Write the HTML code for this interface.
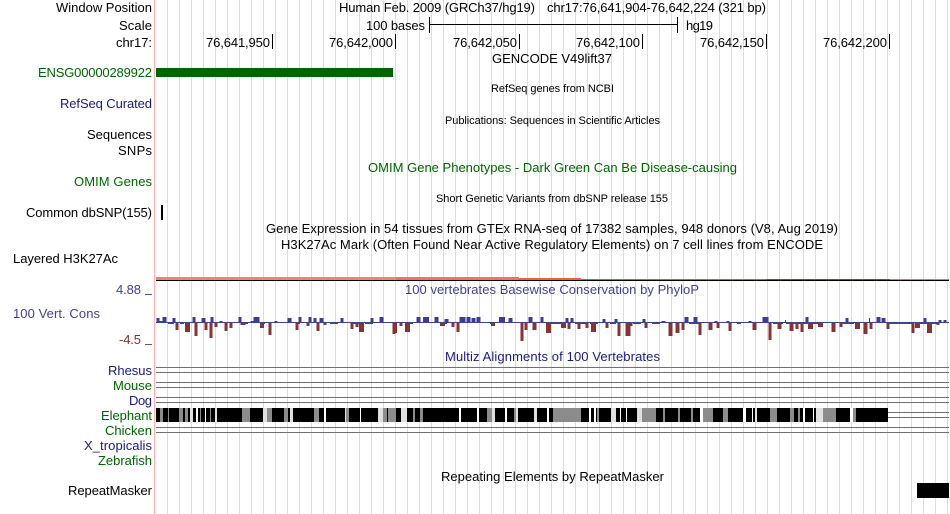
<!DOCTYPE html>
<html>
<head>
<meta charset="utf-8">
<style>
html,body{margin:0;padding:0;background:#fff;width:950px;height:514px;overflow:hidden}
svg{display:block}
text{font-family:"Liberation Sans",sans-serif;font-size:13px;fill:#000}
.s{font-size:11px}
.g{fill:#006400}
.n{fill:#191980}
.p{fill:#404090}
</style>
</head>
<body>
<svg width="950" height="514" viewBox="0 0 950 514" xmlns="http://www.w3.org/2000/svg" shape-rendering="crispEdges">
<rect width="950" height="514" fill="#fff"/>
<!-- grid -->
<path stroke="#dadaf4" stroke-width="1" fill="none" d="M167.5 0v514M179.5 0v514M191.5 0v514M203.5 0v514M215.5 0v514M227.5 0v514M239.5 0v514M251.5 0v514M263.5 0v514M275.5 0v514M287.5 0v514M299.5 0v514M311.5 0v514M323.5 0v514M335.5 0v514M347.5 0v514M359.5 0v514M371.5 0v514M383.5 0v514M395.5 0v514M407.5 0v514M419.5 0v514M431.5 0v514M443.5 0v514M455.5 0v514M467.5 0v514M479.5 0v514M491.5 0v514M503.5 0v514M515.5 0v514M527.5 0v514M539.5 0v514M551.5 0v514M563.5 0v514M575.5 0v514M587.5 0v514M599.5 0v514M611.5 0v514M623.5 0v514M635.5 0v514M647.5 0v514M659.5 0v514M671.5 0v514M683.5 0v514M695.5 0v514M707.5 0v514M719.5 0v514M731.5 0v514M743.5 0v514M755.5 0v514M767.5 0v514M779.5 0v514M791.5 0v514M803.5 0v514M815.5 0v514M827.5 0v514M839.5 0v514M851.5 0v514M863.5 0v514M875.5 0v514M887.5 0v514M899.5 0v514M911.5 0v514M923.5 0v514M935.5 0v514M947.5 0v514"/>
<rect x="154" y="0" width="1" height="514" fill="#ffb0b0"/>

<!-- left labels -->
<text x="56" y="12" textLength="96">Window Position</text>
<text x="119" y="30" textLength="33">Scale</text>
<text x="116" y="47" textLength="36">chr17:</text>
<text class="g" x="38" y="77" textLength="114">ENSG00000289922</text>
<text class="n" x="60" y="108" textLength="92">RefSeq Curated</text>
<text x="87" y="139" textLength="65">Sequences</text>
<text x="118" y="155" textLength="34">SNPs</text>
<text class="g" x="74" y="186" textLength="78">OMIM Genes</text>
<text x="26" y="217" textLength="126">Common dbSNP(155)</text>
<text x="13" y="263" textLength="105">Layered H3K27Ac</text>
<text class="p" x="116" y="294" textLength="25">4.88</text>
<rect x="145" y="294" width="7" height="1" fill="#505090"/>
<text x="13" y="318" class="p" textLength="87">100 Vert. Cons</text>
<text x="119" y="344" textLength="22" style="fill:#803030">-4.5</text>
<rect x="145" y="344" width="7" height="1" fill="#805050"/>
<text class="n" x="108" y="375" textLength="44">Rhesus</text>
<text class="g" x="113" y="390" textLength="39">Mouse</text>
<text class="n" x="129" y="405" textLength="23">Dog</text>
<text class="g" x="101" y="420" textLength="51">Elephant</text>
<text class="g" x="105" y="435" textLength="47">Chicken</text>
<text class="n" x="84" y="450" textLength="68">X_tropicalis</text>
<text class="g" x="98" y="465" textLength="54">Zebrafish</text>
<text x="68" y="495" textLength="84">RepeatMasker</text>

<!-- header -->
<text x="339" y="12" textLength="196">Human Feb. 2009 (GRCh37/hg19)</text>
<text x="547" y="12" textLength="219">chr17:76,641,904-76,642,224 (321 bp)</text>
<text x="366" y="30" textLength="59">100 bases</text>
<text x="686" y="30" textLength="27">hg19</text>
<path stroke="#000" fill="none" d="M429.5 17v16M677.5 17v16M429 24.5h249"/>
<text x="206" y="47" textLength="64">76,641,950</text>
<text x="329" y="47" textLength="64">76,642,000</text>
<text x="453" y="47" textLength="64">76,642,050</text>
<text x="576" y="47" textLength="64">76,642,100</text>
<text x="700" y="47" textLength="64">76,642,150</text>
<text x="823" y="47" textLength="64">76,642,200</text>
<path stroke="#000" fill="none" d="M272.5 34v15M395.5 34v15M519.5 34v15M642.5 34v15M766.5 34v15M889.5 34v15"/>

<!-- center labels -->
<text x="492" y="63" textLength="120">GENCODE V49lift37</text>
<rect x="156" y="68" width="237" height="9" fill="#006400"/>
<text class="s" x="491" y="92" textLength="123">RefSeq genes from NCBI</text>
<text class="s" x="445" y="124" textLength="215">Publications: Sequences in Scientific Articles</text>
<text class="g" x="368" y="172" textLength="369">OMIM Gene Phenotypes - Dark Green Can Be Disease-causing</text>
<text class="s" x="436" y="202" textLength="232">Short Genetic Variants from dbSNP release 155</text>
<rect x="161" y="205" width="2" height="15" fill="#000"/>
<text x="266" y="233" textLength="572">Gene Expression in 54 tissues from GTEx RNA-seq of 17382 samples, 948 donors (V8, Aug 2019)</text>
<text x="281" y="249" textLength="542">H3K27Ac Mark (Often Found Near Active Regulatory Elements) on 7 cell lines from ENCODE</text>

<!-- layered H3K27Ac -->
<rect x="156" y="277" width="240" height="3" fill="#f67f78"/>
<rect x="396" y="277" width="123" height="3" fill="#f4735c"/>
<rect x="519" y="278" width="62" height="2" fill="#f0603c"/>
<rect x="581" y="279" width="185" height="1" fill="#b86060"/>
<rect x="766" y="279" width="124" height="1" fill="#a03838"/>
<rect x="890" y="279" width="59" height="1" fill="#c08080"/>
<rect x="156" y="280" width="793" height="1" fill="#000"/>

<text class="p" x="405" y="294" textLength="294">100 vertebrates Basewise Conservation by PhyloP</text>

<!-- phyloP -->
<rect x="156" y="322" width="793" height="1" fill="#404090"/>
<path stroke="#883333" stroke-width="1" fill="none" d="M168 323.500h6M180 323.500h4M243 323.500h5M262 323.500h3M297 323.500h3M330 323.500h8M352 323.500h12M365 323.500h8M405 323.500h8M441 323.500h6M490 323.500h5M548 323.500h16M575 323.500h12M590 323.500h8M610 323.500h6M633 323.500h8M652 323.500h8M689 323.500h12M737 323.500h4M773 323.500h10M786 323.500h36M840 323.500h14M888 323.500h24M915 323.500h12M932 323.500h6"/>
<path stroke="#3c3c90" stroke-width="3" fill="none" d="M158 323v-5M161 323v-2M174 323v-5M194 323v-6M212 323v-6M221 323v-2M240 323v-6M252 323v-2M276 323v-2M300 323v-6M310 323v-6M315 323v-5M342 323v-5M372 323v-5M542 323v-6M567 323v-5M572 323v-5M604 323v-4M616 323v-4M644 323v-4M807 323v-6M847 323v-5M925 323v-5M940 323v-3M945 323v-3M750 323v-2M716 323v-2M728 323v-2"/>
<path stroke="#3c3c90" stroke-width="1" fill="none" d="M869.500 323v-5M785.500 323v-3"/>
<path stroke="#3c3c90" stroke-width="4" fill="none" d="M164.500 323v-6M203.500 323v-5M289.500 323v-5M321.500 323v-5M381.500 323v-6M418.500 323v-6M436.500 323v-6M446.500 323v-4M468.500 323v-6M473.500 323v-5M478.500 323v-6M510.500 323v-5M530.500 323v-6M686.500 323v-6M695.500 323v-6M878.500 323v-6M883.500 323v-5M663.500 323v-2"/>
<path stroke="#3c3c90" stroke-width="6" fill="none" d="M256.500 323v-6M426 323v-6M462.500 323v-6M502 323v-6M765.500 323v-6"/>
<path stroke="#883333" stroke-width="3" fill="none" d="M177 323v7M196 323v13M206 323v7M211 323v15M216 323v4M226 323v8M231 323v5M270 323v12M297 323v7M308 323v3M318 323v8M325 323v2M352 323v6M357 323v4M394 323v11M401 323v3M453 323v4M458 323v9M522 323v18M526 323v7M569 323v6M579 323v6M587 323v5M607 323v5M619 323v13M631 323v3M646 323v5M683 323v7M700 323v12M718 323v5M730 323v8M770 323v17M797 323v6M802 323v9M841 323v4M871 323v6M888 323v6M913 323v10M938 323v2"/>
<path stroke="#883333" stroke-width="4" fill="none" d="M262 323v5M395 323v10M534.500 323v7M670.500 323v13M677.500 323v10M710.500 323v7M754.500 323v7M779.500 323v6M791.500 323v8M833.500 323v9M865.500 323v11M493 323v3"/>
<path stroke="#883333" stroke-width="5" fill="none" d="M187.500 323v9M407.500 323v9M361.500 323v9M548.500 323v10M628 323v13M563.500 323v5M593.500 323v9M810.500 323v6M820.500 323v4M857.500 323v6M917.500 323v5M929.500 323v10M442.500 323v3M243 323v2"/>

<text class="n" x="445" y="361" textLength="215">Multiz Alignments of 100 Vertebrates</text>

<!-- multiz lines -->
<path stroke="#707070" fill="none" d="M156 367.500h793M156 372.500h793M156 382.500h793M156 387.500h793M156 397.500h793M156 402.500h793M156 427.500h793M156 432.500h793M888 412.500h61M888 417.500h61"/>
<!-- elephant -->
<rect x="156" y="408" width="732" height="14" fill="#000"/>
<g fill="#8c8c8c">
<rect x="160" y="408" width="3" height="14"/><rect x="168" y="408" width="1" height="14"/><rect x="179" y="408" width="4" height="14"/><rect x="185" y="408" width="3" height="14"/><rect x="200" y="408" width="1" height="14"/><rect x="210" y="408" width="1" height="14"/>
<rect x="242" y="408" width="8" height="14"/><rect x="267" y="408" width="5" height="14"/><rect x="284" y="408" width="4" height="14"/><rect x="314" y="408" width="5" height="14"/><rect x="345" y="408" width="4" height="14"/><rect x="382" y="408" width="5" height="14"/><rect x="388" y="408" width="8" height="14"/><rect x="413" y="408" width="2" height="14"/><rect x="420" y="408" width="3" height="14"/><rect x="487" y="408" width="5" height="14"/><rect x="514" y="408" width="2" height="14"/>
<rect x="553" y="408" width="28" height="14"/><rect x="597" y="408" width="2" height="14"/><rect x="643" y="408" width="13" height="14"/><rect x="663" y="408" width="2" height="14"/><rect x="678" y="408" width="2" height="14"/><rect x="691" y="408" width="2" height="14"/><rect x="703" y="408" width="10" height="14"/><rect x="723" y="408" width="5" height="14"/><rect x="642" y="408" width="1" height="14"/><rect x="755" y="408" width="1" height="14"/><rect x="770" y="408" width="7" height="14"/><rect x="790" y="408" width="4" height="14"/><rect x="798" y="408" width="2" height="14"/><rect x="823" y="408" width="13" height="14"/><rect x="853" y="408" width="3" height="14"/>
</g>
<g fill="#e0e0e0">
<rect x="215" y="408" width="2" height="14"/><rect x="190" y="408" width="3" height="14"/><rect x="263" y="408" width="4" height="14"/><rect x="290" y="408" width="3" height="14"/><rect x="345" y="408" width="1" height="14"/><rect x="378" y="408" width="5" height="14"/><rect x="401" y="408" width="6" height="14"/><rect x="492" y="408" width="3" height="14"/><rect x="516" y="408" width="2" height="14"/><rect x="534" y="408" width="3" height="14"/><rect x="611" y="408" width="5" height="14"/><rect x="637" y="408" width="5" height="14"/><rect x="755" y="408" width="2" height="14"/><rect x="816" y="408" width="7" height="14"/>
</g>
<g fill="#fff">
<rect x="196" y="408" width="2" height="14"/><rect x="205" y="408" width="1" height="14"/><rect x="324" y="408" width="2" height="14"/><rect x="360" y="408" width="1" height="14"/><rect x="459" y="408" width="2" height="14"/><rect x="477" y="408" width="2" height="14"/><rect x="505" y="408" width="2" height="14"/><rect x="547" y="408" width="2" height="14"/><rect x="589" y="408" width="2" height="14"/><rect x="594" y="408" width="2" height="14"/><rect x="620" y="408" width="1" height="14"/><rect x="626" y="408" width="1" height="14"/><rect x="700" y="408" width="3" height="14"/><rect x="743" y="408" width="3" height="14"/><rect x="752" y="408" width="1" height="14"/><rect x="803" y="408" width="2" height="14"/><rect x="813" y="408" width="1" height="14"/><rect x="850" y="408" width="3" height="14"/>
</g>

<text x="441" y="481" textLength="223">Repeating Elements by RepeatMasker</text>
<rect x="917" y="483" width="32" height="15" fill="#000"/>
</svg>
</body>
</html>
